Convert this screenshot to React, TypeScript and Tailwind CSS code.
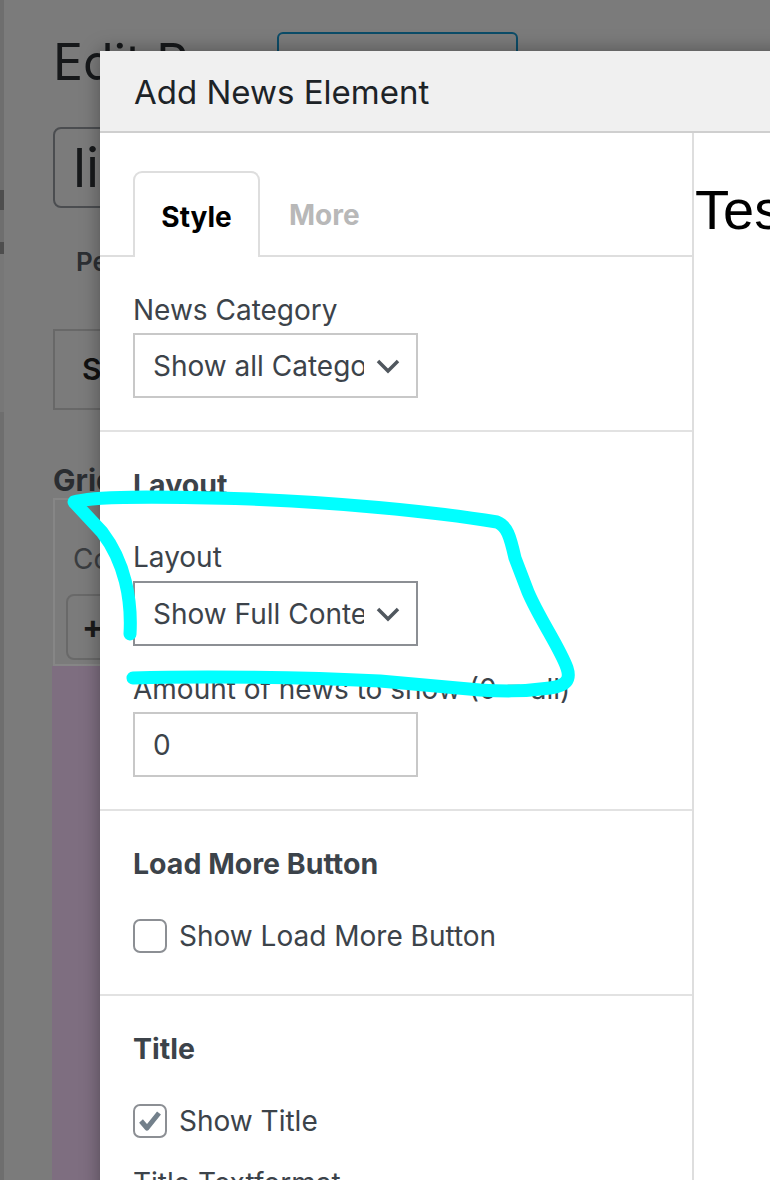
function Select({ value, focused }: { value: string; focused?: boolean }) {
  return (
    <div
      className={`flex items-center w-[285px] h-[65px] border-2 ${
        focused ? "border-[#8c8f94]" : "border-[#c8c8c8]"
      } bg-white pl-[18px] pr-[16px]`}
    >
      <span className="flex-1 overflow-hidden whitespace-nowrap text-[28px] text-[#3c434a]">{value}</span>
      <svg width="24" height="16" viewBox="0 0 24 16" className="ml-[12px] shrink-0">
        <path d="M2 3 L12 13 L22 3" fill="none" stroke="#50575e" strokeWidth="3.5" />
      </svg>
    </div>
  );
}

function Checkbox({ checked, label }: { checked?: boolean; label: string }) {
  return (
    <label className="flex items-center gap-[12px] h-[36px]">
      <span className="w-[34px] h-[34px] rounded-[7px] border-2 border-[#8c8f94] bg-white flex items-center justify-center">
        {checked && (
          <svg width="24" height="24" viewBox="0 0 24 24">
            <path d="M3 12 L9 19 L21 4" fill="none" stroke="#73808b" strokeWidth="5" strokeLinejoin="round" />
          </svg>
        )}
      </span>
      <span className="text-[28px] text-[#3c434a]">{label}</span>
    </label>
  );
}

function Section({ title, children, last }: { title?: string; children: React.ReactNode; last?: boolean }) {
  return (
    <div className={`px-[33px] pt-[35px] pb-[32px] ${last ? "" : "border-b-2 border-[#e2e2e2]"}`}>
      {title && <h3 className="text-[28.5px] leading-[36px] font-bold text-[#3c434a] mb-[36px]">{title}</h3>}
      {children}
    </div>
  );
}

function AdminBackdrop() {
  return (
    <div className="flex h-full">
      <div className="w-[4px] bg-[#6e6e6e] flex flex-col">
        <div className="h-[190px]" />
        <div className="h-[20px] bg-[#4e4e4e]" />
        <div className="h-[32px]" />
        <div className="h-[12px] bg-[#4e4e4e]" />
        <div className="h-[158px] bg-[#777]" />
      </div>
      <div className="flex-1 flex flex-col pl-[49px] pt-[32px] text-[#1a1c1e] font-['Inter',sans-serif]">
        <div className="flex items-start h-[95px]">
          <h1 className="text-[50px] leading-[60px] w-[224px] text-[#16181a]">Edit Page</h1>
          <div className="w-[241px] h-[44px] border-2 border-[#0b4c68] rounded-md" />
        </div>
        <div className="h-[81px] w-[600px] rounded-lg border-2 border-[#4b4d50] flex items-center pl-[18px]">
          <span className="text-[54px] leading-none text-[#17191b]">light</span>
        </div>
        <div className="pl-[23px] pt-[34px] h-[121px] text-[26px] font-semibold text-[#2c2f33]">Permalink</div>
        <div className="h-[81px] w-[300px] border-2 border-[#686868] flex items-center pl-[27px]">
          <span className="text-[30px] font-semibold text-[#111]">Save</span>
        </div>
        <div className="pt-[54px] text-[30px] leading-[32px] font-bold text-[#2a2d31]">Grid</div>
        <div className="h-[168px] w-[500px] border-2 border-[#868686] mt-[2px] flex flex-col">
          <div className="pl-[18px] pt-[38px] text-[28px] text-[#3a3d40]">Columns</div>
          <div className="ml-[11px] mt-[14px] w-[200px] h-[66px] rounded-lg border-2 border-[#696969] flex items-center pl-[14px] text-[32px] font-bold text-[#1a1a1a]">
            +
          </div>
        </div>
        <div className="flex-1 bg-[#7e6e80] -ml-[1px]" />
      </div>
    </div>
  );
}

export default function App() {
  return (
    <div className="relative w-[770px] h-[1180px] overflow-hidden bg-[#7b7b7b]">
      <AdminBackdrop />

      <div className="absolute left-[100px] top-[51px] w-[800px] h-[1200px] bg-white shadow-[0_0_18px_rgba(0,0,0,0.35)] flex flex-col font-['Inter',sans-serif]">
        <div className="h-[82px] shrink-0 bg-[#f0f0f0] border-b-2 border-[#cfcfcf] flex items-center px-[34px] pt-[3px]">
          <h2 className="text-[33px] text-[#1d2327]">Add News Element</h2>
        </div>

        <div className="flex flex-1">
          <div className="w-[594px] shrink-0 border-r-2 border-[#dedede] flex flex-col">
            <div className="pt-[38px] px-[33px] flex items-end gap-[29px] border-b-2 border-[#dedede]">
              <div className="w-[127px] h-[86px] -mb-[2px] border-2 border-b-0 border-[#dedede] rounded-t-[9px] bg-white flex items-center justify-center pt-[4px]">
                <span className="text-[28px] font-bold text-black">Style</span>
              </div>
              <div className="h-[84px] flex items-center pt-[4px]">
                <span className="text-[28px] font-bold text-[#b8b8b8]">More</span>
              </div>
            </div>

            <Section>
              <div className="text-[28px] leading-[36px] text-[#3c434a] mb-[5px]">News Category</div>
              <Select value="Show all Categories" />
            </Section>

            <Section title="Layout">
              <div className="text-[28px] leading-[36px] text-[#3c434a] mb-[6px]">Layout</div>
              <Select value="Show Full Content" focused />
              <div className="text-[28px] leading-[36px] text-[#3c434a] mt-[25px] mb-[5px] whitespace-nowrap">
                Amount of news to show (0 = all)
              </div>
              <div className="w-[285px] h-[65px] border-2 border-[#c8c8c8] flex items-center pl-[18px] text-[28px] text-[#3c434a]">
                0
              </div>
            </Section>

            <Section title="Load More Button">
              <div className="pb-[8px]">
                <Checkbox label="Show Load More Button" />
              </div>
            </Section>

            <Section title="Title" last>
              <Checkbox checked label="Show Title" />
              <div className="mt-[26px] text-[28px] leading-[36px] text-[#3c434a]">Title Textformat</div>
            </Section>
          </div>

          <div className="flex-1 min-w-0 pt-[49px] pl-[1px]">
            <span className="font-['Liberation_Sans',Arial,sans-serif] text-[56px] leading-none text-black whitespace-nowrap">
              Test News
            </span>
          </div>
        </div>
      </div>

      <svg className="absolute inset-0 pointer-events-none" width="770" height="1180" viewBox="0 0 770 1180">
        <path
          d="M130 634 C132 600 125 562 102 532 L74 502 C92 496 150 496 250 499 C330 502 430 511 497 522 C507 526 510 536 515 558 L528 592 C540 620 560 648 567 668 C571 680 566 686 550 688 C520 692 500 691 480 690 L380 681 C300 677 200 676 133 678"
          fill="none"
          stroke="#00ffff"
          strokeWidth="13"
          strokeLinecap="round"
          strokeLinejoin="round"
        />
      </svg>
    </div>
  );
}
